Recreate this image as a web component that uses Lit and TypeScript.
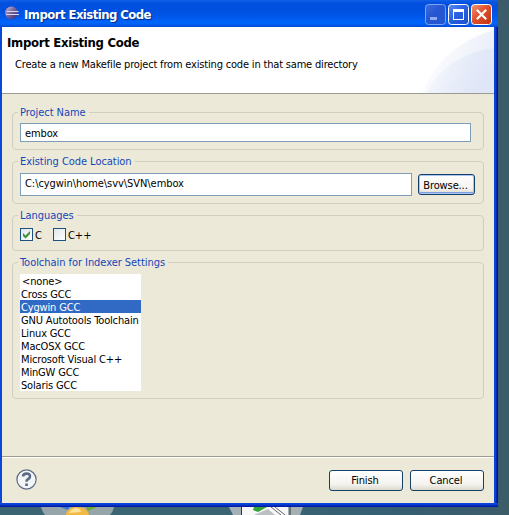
import { LitElement, html, css, svg } from "lit";
import { customElement, property, state } from "lit/decorators.js";
import { classMap } from "lit/directives/class-map.js";

@customElement("group-box")
class GroupBox extends LitElement {
  @property() label = "";
  static styles = css`
    :host { display: block; box-sizing: border-box; border: 1px solid #d0cfbf; border-radius: 4px; padding: 0 7px; }
    .legend { display: block; width: max-content; height: 14px; line-height: 16px; margin: -8px 0 0 -2px; padding: 0 3px 0 2px; background: #ece9d8; color: #1546b8; white-space: nowrap; letter-spacing: -0.05px; }
  `;
  render() {
    return html`<span class="legend">${this.label}</span><slot></slot>`;
  }
}

@customElement("app-root")
class AppRoot extends LitElement {
  @state() selected = "Cygwin GCC";
  toolchains = ["<none>", "Cross GCC", "Cygwin GCC", "GNU Autotools Toolchain", "Linux GCC", "MacOSX GCC", "Microsoft Visual C++", "MinGW GCC", "Solaris GCC"];

  static styles = css`
    :host { display: block; position: relative; width: 509px; height: 515px; overflow: hidden; background: linear-gradient(90deg, #3c6573 0 45%, #355f73 75%, #3d5c6a); font: 11px "DejaVu Sans Condensed", "DejaVu Sans", sans-serif; color: #000; }
    .desktop { position: absolute; left: 0; top: 507px; display: block; }
    .window { position: relative; box-sizing: border-box; width: 498px; height: 507px; display: flex; flex-direction: column; padding: 0 4px 4px 2px; background: linear-gradient(90deg, #0a48d8 0 2px, #0a48d8 494px, #0b3fd0 496px, #00129b 497px); }
    .window::after { content: ""; position: absolute; left: 0; right: 0; bottom: 0; height: 4px; background: linear-gradient(#0a4be0, #0838cb 50%, #00129b); }
    .title { flex: none; box-sizing: border-box; height: 27px; margin: 0 -4px 0 -2px; padding: 1px 6px 0 4px; display: flex; align-items: center; background: linear-gradient(#1260e8 0, #0350df 3px, #0050e0 10px, #0057ea 17px, #0065fb 22px, #0062f8 24px, #0048cf 27px); }
    .logo { width: 16px; height: 16px; margin-right: 4px; display: block; }
    .title b { flex: 1; font: bold 13px "DejaVu Sans Condensed", sans-serif; color: #fff; text-shadow: 1px 1px 1px #0a2a88; white-space: nowrap; letter-spacing: -0.56px; }
    .controls { display: flex; gap: 2px; }
    .controls svg { display: block; width: 21px; height: 21px; }
    .header { flex: none; position: relative; box-sizing: border-box; height: 67px; padding: 8px 0 0 5px; background: #fff; border-bottom: 1px solid #9b9b94; }
    .swoosh { position: absolute; right: 0; top: 0; }
    .header h1 { position: relative; margin: 0; font: bold 13px/16px "DejaVu Sans Condensed", sans-serif; letter-spacing: -0.3px; white-space: nowrap; }
    .header p { position: relative; margin: 5px 0 0 8px; line-height: 17px; white-space: nowrap; letter-spacing: -0.18px; }
    .body { flex: none; box-sizing: border-box; height: 362px; padding: 18px 10px 0; background: #ece9d8; }
    .field { box-sizing: border-box; border: 1px solid #7f9db9; background: #fff; display: flex; align-items: center; padding: 1px 4px 0; white-space: nowrap; letter-spacing: -0.1px; }
    .g1 { height: 38px; } .g1 .field { margin-top: 4px; width: 451px; height: 19px; }
    .g2 { height: 43px; margin-top: 11px; } .line { display: flex; align-items: center; gap: 6px; margin-top: 5px; }
    .g2 .field { width: 392px; height: 23px; padding-top: 0; padding-bottom: 3px; letter-spacing: -0.06px; }
    .g3 { height: 36px; margin-top: 11px; } .checks { display: flex; margin-top: 6px; gap: 11px; }
    .check { display: flex; align-items: center; gap: 2px; height: 13px; white-space: nowrap; }
    .check svg { display: block; }
    .check span { line-height: 13px; padding-top: 1px; }
    .g4 { height: 137px; margin-top: 11px; }
    .list { margin-top: 5px; width: 121px; height: 117px; background: #fff; }
    .row { height: 13px; line-height: 15px; padding-left: 1px; white-space: nowrap; letter-spacing: -0.16px; }
    .row.none { padding-left: 2px; }
    .row.sel { background: #316ac5; color: #fff; }
    .btn { box-sizing: border-box; height: 21px; border: 1px solid #12406b; border-radius: 3px; background: linear-gradient(#fff, #f4f3ee 70%, #dcd8cc); display: flex; align-items: center; justify-content: center; white-space: nowrap; width: 74px; letter-spacing: -0.12px; padding: 1px 2px 0 0; }
    .btn.browse { width: 57px; box-shadow: inset 0 0 0 1px #a9c5f0, inset 0 -2px 0 #7e9fdc; }
    .footer { flex: 1; box-sizing: border-box; border-top: 1px solid #9d9c8e; box-shadow: inset 0 1px #fff; background: #ece9d8; padding: 0 10px 0 14px; display: flex; align-items: center; gap: 7px; }
    .help { margin: -2px auto 0 0; display: block; }
  `;

  private checkbox(on: boolean) {
    return html`<svg width="13" height="13" viewBox="0 0 13 13">
      <defs><linearGradient id="f" x2="1" y2="1"><stop stop-color="#dfe5ea" /><stop offset="1" stop-color="#fff" /></linearGradient></defs>
      <rect x=".5" y=".5" width="12" height="12" fill="url(#f)" stroke="#1c5180" />
      ${on ? svg`<path d="M3 5v3l2.500 2.500L10 6V3L5.500 7.500z" fill="#3c9430" />` : ""}
    </svg>`;
  }

  private control(kind: "min" | "max" | "close") {
    const c = kind === "close" ? ["#f0987c", "#e0502c", "#bf3510"] : kind === "max" ? ["#5d8df5", "#2a60e2", "#1c4fcb"] : ["#3d6ee4", "#2656d0", "#2157d4"];
    return html`<svg viewBox="0 0 21 21">
      <defs><linearGradient id=${"fill-" + kind} x2="1" y2="1"><stop stop-color=${c[0]} /><stop offset=".45" stop-color=${c[1]} /><stop offset="1" stop-color=${c[2]} /></linearGradient></defs>
      <rect x=".5" y=".5" width="20" height="20" rx="3" fill=${"url(#fill-" + kind + ")"} stroke=${kind === "min" ? "#7ea3f0" : "#fff"} />
      ${kind === "min" ? svg`<path d="M5 13h7v3H5z" fill="#8eaaf0" />` : ""}
      ${kind === "max" ? svg`<path d="M5 5h11v11H5zM6 8v7h9V8z" fill="#fff" fill-rule="evenodd" />` : ""}
      ${kind === "close" ? svg`<path d="M5.800 5.800l9.400 9.400M15.200 5.800l-9.400 9.400" stroke="#fff" stroke-width="2.200" />` : ""}
    </svg>`;
  }

  render() {
    return html`
      <svg class="desktop" width="509" height="8" viewBox="0 0 509 8">
        <path d="M41 0h73q-1 5-4 8H45q-3-4-4-8z" fill="#96a5a9" />
        <path d="M60 0h10l-2 3z" fill="#3978d3" /><path d="M86 0h11l-9 4z" fill="#6dab2a" />
        <path d="M66 8q1-8 11-8t12 8z" fill="#f5b942" /><path d="M69 6q3-5 8-5 4 1 4 4z" fill="#ffe39a" />
        <path d="M229 0h74l-3 8h-67z" fill="#a4b0b3" />
        <path d="M241 0h47v8h-47z" fill="#f7f7f7" /><path d="M241.500 0v8M290 0v8" stroke="#333" />
        <path d="M254 0h13l-9 5-5-2z" fill="#31a536" /><path d="M254 8l14-6 7 6z" fill="#bcc0c2" />
        <path d="M271 0l10 8M275 0l10 8" stroke="#69676e" />
      </svg>
      <div class="window">
        <div class="title">
          <svg class="logo" viewBox="0 0 16 16">
            <defs><linearGradient id="e" x2="1" y2="1"><stop stop-color="#e0bfd0" /><stop offset=".45" stop-color="#75659f" /><stop offset="1" stop-color="#30277c" /></linearGradient></defs>
            <circle cx="7.500" cy="7" r="6.400" fill="url(#e)" />
            <path d="M3 5.500h11.500M2 8.500h13" stroke="#d5d6ee" stroke-width="1.200" />
          </svg>
          <b>Import Existing Code</b>
          <div class="controls">${this.control("min")}${this.control("max")}${this.control("close")}</div>
        </div>
        <div class="header">
          <svg class="swoosh" width="90" height="66" viewBox="0 0 90 66">
            <defs><linearGradient id="s" x1=".15" x2="1" y2=".3"><stop stop-color="#fff" /><stop offset="1" stop-color="#eaeef9" /></linearGradient>
            <linearGradient id="t" x1=".05" x2="1" y2=".3"><stop stop-color="#e3e9f8" stop-opacity="0" /><stop offset="1" stop-color="#dfe6f7" /></linearGradient></defs>
            <path d="M18 66Q38 18 90 3V66z" fill="url(#s)" /><path d="M22 66Q42 28 90 21V66z" fill="url(#t)" />
          </svg>
          <h1>Import Existing Code</h1>
          <p>Create a new Makefile project from existing code in that same directory</p>
        </div>
        <div class="body">
          <group-box class="g1" label="Project Name"><div class="field">embox</div></group-box>
          <group-box class="g2" label="Existing Code Location">
            <div class="line"><div class="field">C:\\cygwin\\home\\svv\\SVN\\embox</div><div class="btn browse">Browse...</div></div>
          </group-box>
          <group-box class="g3" label="Languages">
            <div class="checks">
              <div class="check">${this.checkbox(true)}<span>C</span></div>
              <div class="check">${this.checkbox(false)}<span>C++</span></div>
            </div>
          </group-box>
          <group-box class="g4" label="Toolchain for Indexer Settings">
            <div class="list">
              ${this.toolchains.map((t) => html`<div class=${classMap({ row: true, none: t === "<none>", sel: t === this.selected })} @click=${() => (this.selected = t)}>${t}</div>`)}
            </div>
          </group-box>
        </div>
        <div class="footer">
          <svg class="help" width="21" height="21" viewBox="0 0 21 21">
            <circle cx="10.500" cy="10.500" r="9.600" fill="#f4f5f7" stroke="#5b6c84" stroke-width="1.200" />
            <path d="M7 7.500Q7.200 4.600 10.600 4.600T14 7.500Q14 9 12 10.200 10.500 11.100 10.500 12.800" fill="none" stroke="#5b6c84" stroke-width="2.600" />
            <path d="M9.200 14.500h2.700v2.500H9.200z" fill="#5b6c84" />
          </svg>
          <div class="btn">Finish</div><div class="btn">Cancel</div>
        </div>
      </div>`;
  }
}
